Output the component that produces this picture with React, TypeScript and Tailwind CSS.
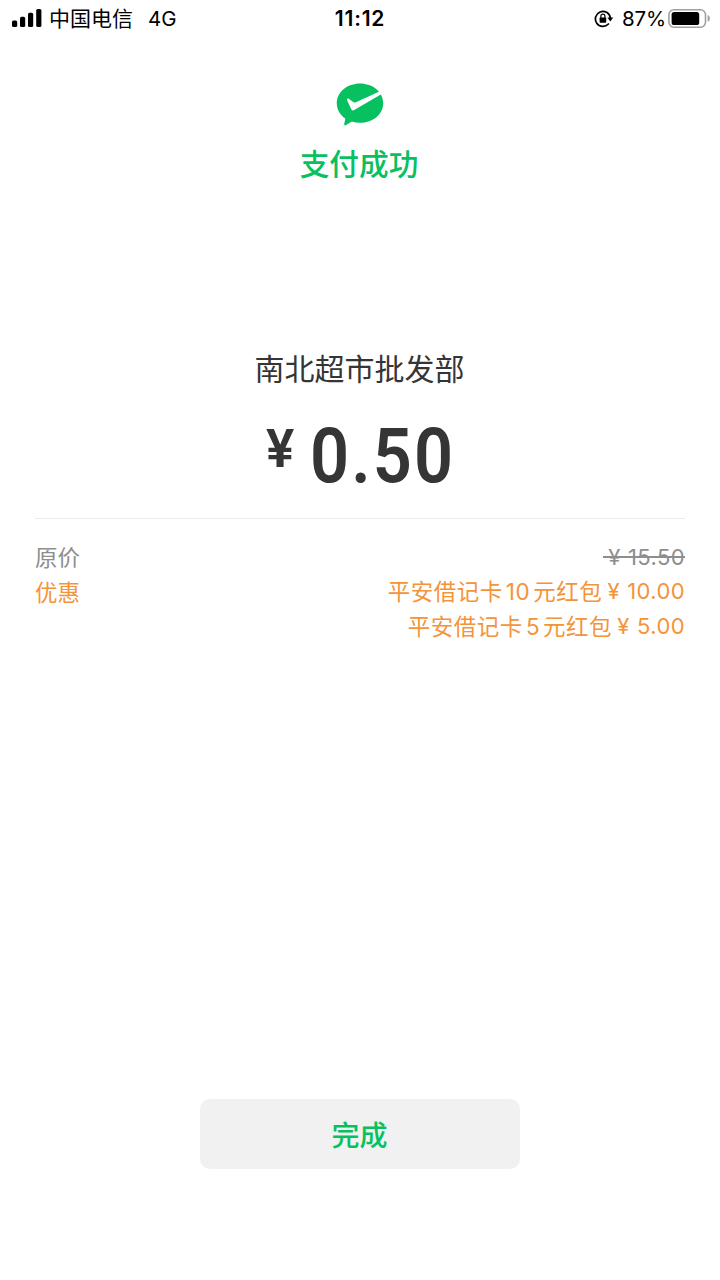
import type { ReactNode } from "react";

const sans = "font-['Inter','Noto_Sans_CJK_SC',sans-serif]";
const cjk = "font-['Noto_Sans_CJK_SC',sans-serif]";

function SignalIcon() {
  return (
    <svg width="30" height="20" viewBox="0 0 30 20" className="shrink-0">
      <rect x="0" y="11.4" width="5.2" height="6.6" rx="1.6" />
      <rect x="8" y="7.8" width="5.2" height="10.2" rx="1.6" />
      <rect x="16" y="3.8" width="5.2" height="14.2" rx="1.6" />
      <rect x="24.2" y="0" width="5.2" height="18" rx="1.6" />
    </svg>
  );
}

function RotationLockIcon() {
  return (
    <svg width="20" height="18" viewBox="0 0 20 18" className="shrink-0">
      <path d="M14.400 14A7.500 7.500 0 1 1 16.300 7.600" fill="none" stroke="#000" strokeWidth="1.700" strokeLinecap="round" />
      <path d="M13.400 7.400h5.800l-2.900 4z" />
      <rect x="5.600" y="7.500" width="6.600" height="5.200" rx="0.700" />
      <path d="M6.900 8V6.100a2 2 0 0 1 4 0v1.900" fill="none" stroke="#000" strokeWidth="1.200" />
    </svg>
  );
}

function BatteryIcon() {
  return (
    <svg width="43" height="20" viewBox="0 0 43 20" className="shrink-0">
      <rect x="0.9" y="0.8" width="36.6" height="17.4" rx="5" fill="none" stroke="#a0a0a0" strokeWidth="1.600" />
      <rect x="3.6" y="3" width="27.6" height="13" rx="2.6" />
      <path d="M39.6 6c3 1 3 5.800 0 6.800z" fill="#a0a0a0" />
    </svg>
  );
}

function PayLogo() {
  return (
    <svg width="48" height="44" viewBox="0 0 48 44">
      <path
        d="M24 0.500C11 0.500 0.800 9.200 0.800 20.200c0 6.400 3.300 11.700 8.500 15.400L8.200 41.200c-.2 1 .7 1.500 1.500 1l6.200-3.600c2.600.8 5.300 1.200 8.100 1.200 13 0 23.200-8.600 23.200-19.600S37 0.500 24 0.500z"
        fill="#07c160"
      />
      <path
        d="M46.500 10.600 18.200 27c-1.300.8-2.300.5-2.900-.8L11.100 17.300c-.6-1.400.5-2.300 1.700-1.500l4.400 3.300c.9.600 1.700.7 2.700.2L44.500 8.100z"
        fill="#fff"
      />
    </svg>
  );
}

function Price({ value, struck = false }: { value: string; struck?: boolean }) {
  return (
    <span className="relative flex text-[22px] tracking-[0.400px]">
      <span className="w-[23px] text-center">¥</span>
      <span className="ml-[2px]">{value}</span>
      {struck && <span className="absolute top-[17px] right-0 left-0 h-[1.500px] bg-[#8e8e8e]" />}
    </span>
  );
}

function Discount({ label, price }: { label: ReactNode; price: string }) {
  return (
    <div className="flex h-[35px] leading-[35px]">
      <span className="text-[22.500px] tracking-[0.500px]">{label}</span>
      <Price value={price} />
    </div>
  );
}

export default function App() {
  return (
    <div className={`flex h-[1280px] w-[720px] flex-col bg-white ${sans}`}>
      <header className="grid h-[37px] grid-cols-3 items-center text-black">
        <div className="flex items-center pl-3">
          <SignalIcon />
          <span className={`mb-[2px] ml-[7px] text-[21px] leading-[35px] ${cjk}`}>中国电信</span>
          <span className="ml-[15px] text-[20.500px] leading-[37px]">4G</span>
        </div>
        <div className="text-center text-[21px] leading-[37px] font-semibold tracking-[0.800px]">11:12</div>
        <div className="flex items-center justify-end pr-[9px]">
          <RotationLockIcon />
          <span className="mr-[2px] ml-[8px] text-[20.500px] leading-[37px] tracking-[-0.100px]">87%</span>
          <BatteryIcon />
        </div>
      </header>

      <main className="flex flex-1 flex-col items-center">
        <div className="mt-[46px] h-[44px]">
          <PayLogo />
        </div>
        <h1 className={`mt-[14px] mr-[2px] text-[29.700px] leading-[44px] font-medium text-[#07c160] ${cjk}`}>支付成功</h1>

        <p className={`mt-[160px] mr-[1px] text-[30px] leading-[44px] text-[#353535] ${cjk}`}>南北超市批发部</p>
        <div className="mt-[22px] flex h-[90px] w-[190px] items-start font-['Roboto',sans-serif] font-semibold text-[#353535]">
          <span className="w-[45px] shrink-0 pl-[1px] text-[53px] leading-[77px]">¥</span>
          <span className="origin-left scale-x-[0.900] text-[76px] leading-[90px] tracking-[2.400px]">0.50</span>
        </div>

        <section className="mt-[17px] flex w-[650px] justify-between border-t border-[#ebebeb] pt-[20px]">
          <div className={`text-[22.500px] leading-[35px] ${cjk}`}>
            <div className="text-[#8e8e8e]">原价</div>
            <div className="text-[#f4943a]">优惠</div>
          </div>
          <div className="flex flex-col items-end text-[#f4943a]">
            <div className="flex h-[35px] leading-[36px] text-[#8e8e8e]">
              <Price value="15.50" struck />
            </div>
            <Discount label={<>平安借记卡<span className="mx-[3px]">10</span>元红包</>} price="10.00" />
            <Discount label={<>平安借记卡<span className="mx-[3px]">5</span>元红包</>} price="5.00" />
          </div>
        </section>

        <button
          className={`mt-auto mb-[111px] h-[70px] w-[320px] rounded-[10px] bg-[#f1f1f1] pr-[1px] pb-[1px] text-[28px] font-medium text-[#07c160] ${cjk}`}
        >
          完成
        </button>
      </main>
    </div>
  );
}
